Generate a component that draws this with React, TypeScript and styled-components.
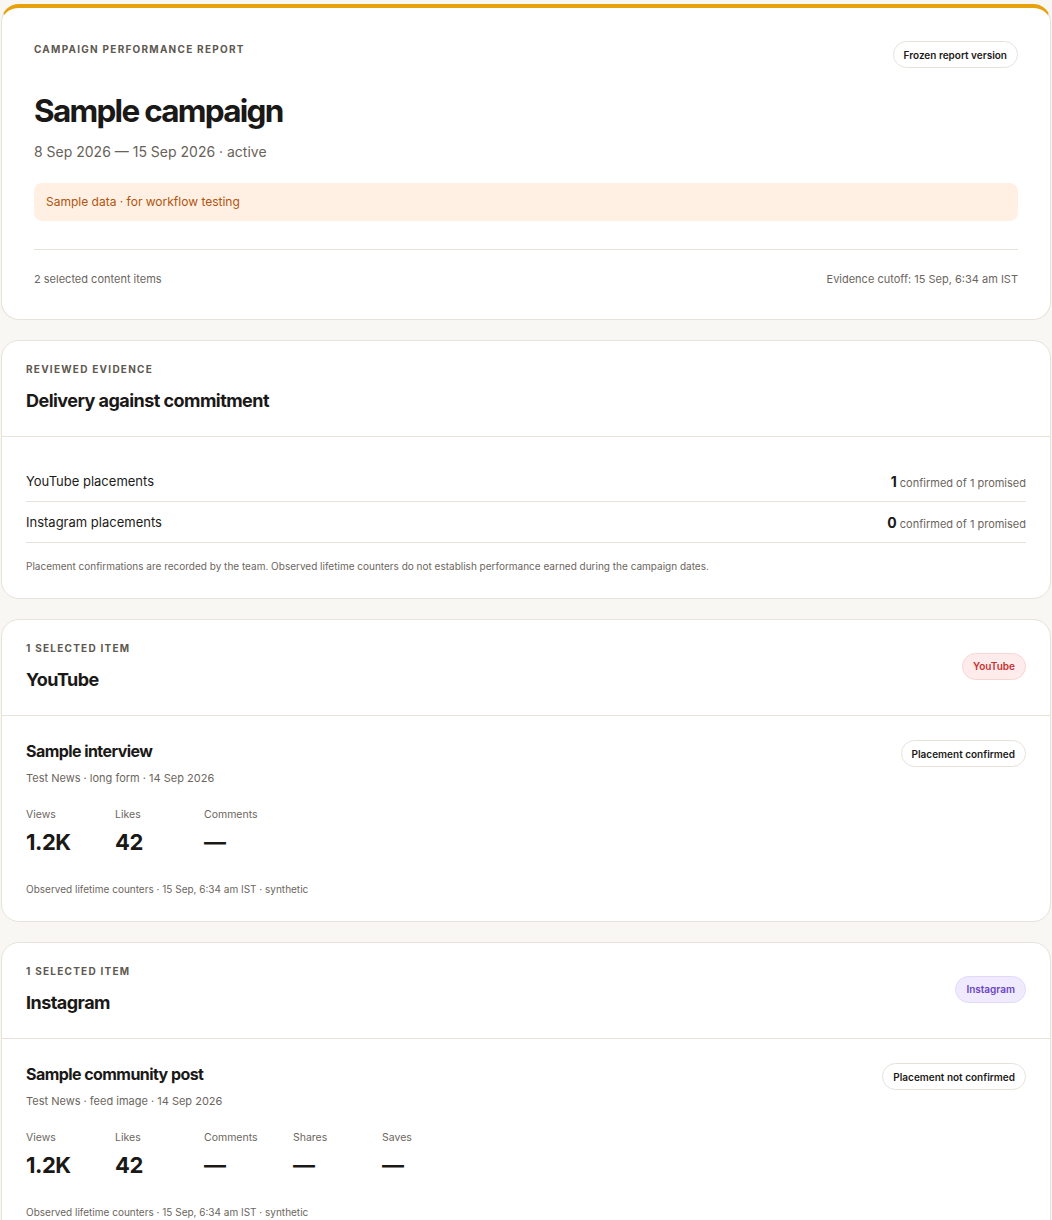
import React from "react";
import styled, { createGlobalStyle } from "styled-components";

const Global = createGlobalStyle`
  html, body { margin: 0; padding: 0; background: #f8f7f3; }
  body { font-family: Inter, "Noto Sans", "Liberation Sans", sans-serif; color: #1c1b19; -webkit-font-smoothing: antialiased; }
  * { box-sizing: border-box; }
`;

const Page = styled.div`
  display: flex;
  flex-direction: column;
  gap: 20px;
  padding: 4px 1px 40px;
`;

const Card = styled.section<{ $accent?: boolean }>`
  background: #ffffff;
  border: 1px solid #e7e3da;
  border-top: ${(p) => (p.$accent ? "4px solid #e7a10d" : "1px solid #e7e3da")};
  border-radius: 18px;
  overflow: hidden;
`;

const HeroBody = styled.div`
  padding: 33px 32px 32px;
`;

const TopRow = styled.div`
  display: flex;
  justify-content: space-between;
  align-items: flex-start;
`;

const Eyebrow = styled.div`
  font-size: 10px;
  line-height: 16px;
  font-weight: 700;
  letter-spacing: 0.125em;
  text-transform: uppercase;
  color: #5d5850;
`;

const Pill = styled.span<{ $tone?: "plain" | "red" | "purple" }>`
  display: inline-flex;
  align-items: center;
  height: 27px;
  padding: 0 10px;
  border-radius: 999px;
  font-size: 10px;
  font-weight: 600;
  white-space: nowrap;
  flex: none;
  background: ${(p) => (p.$tone === "red" ? "#fdeceb" : p.$tone === "purple" ? "#efeafd" : "#ffffff")};
  border: 1px solid ${(p) => (p.$tone === "red" ? "#f5d6d4" : p.$tone === "purple" ? "#e2d9fa" : "#e6e2da")};
  color: ${(p) => (p.$tone === "red" ? "#c8302e" : p.$tone === "purple" ? "#6a46c4" : "#1c1b19")};
`;

const HeroTitle = styled.h1`
  margin: 25px 0 0;
  font-size: 31.5px;
  line-height: 36px;
  font-weight: 700;
  letter-spacing: -0.055em;
  color: #1a1917;
`;

const DateLine = styled.div`
  margin-top: 13px;
  font-size: 14px;
  line-height: 20px;
  color: #67625a;
`;

const Notice = styled.div`
  margin-top: 21px;
  padding: 10px 12px;
  background: #fff0e3;
  border-radius: 8px;
  font-size: 12px;
  line-height: 18px;
  color: #b1540e;
`;

const HeroFooter = styled.div`
  margin-top: 28px;
  padding-top: 21px;
  border-top: 1px solid #e7e3da;
  display: flex;
  justify-content: space-between;
  font-size: 11px;
  line-height: 16px;
  color: #6b665e;
`;

const Header = styled.div`
  display: flex;
  justify-content: space-between;
  align-items: center;
  padding: 20px 24px 23px;
  border-bottom: 1px solid #e7e3da;
`;

const SectionTitle = styled.h2`
  margin: 12px 0 0;
  font-size: 18px;
  line-height: 24px;
  font-weight: 700;
  letter-spacing: -0.03em;
  color: #1a1917;
`;

const Body = styled.div`
  padding: 24px 24px 25px;
`;

const EvidenceRow = styled.div`
  display: flex;
  justify-content: space-between;
  align-items: center;
  height: 41px;
  border-bottom: 1px solid #e7e3da;
  font-size: 13px;
  color: #1c1b19;
`;

const Count = styled.span`
  display: inline-flex;
  align-items: baseline;
  gap: 3px;
  font-size: 11px;
  color: #6b665e;
  b {
    font-size: 14px;
    font-weight: 700;
    color: #1a1917;
  }
`;

const Fine = styled.p<{ $gap?: number }>`
  margin: ${(p) => p.$gap ?? 18}px 0 0;
  font-size: 10px;
  line-height: 14px;
  color: #6b665e;
`;

const ItemHead = styled.div`
  display: flex;
  justify-content: space-between;
  align-items: flex-start;
`;

const ItemTitle = styled.h3`
  margin: 0;
  font-size: 16px;
  line-height: 22px;
  font-weight: 700;
  letter-spacing: -0.035em;
  color: #1a1917;
`;

const Meta = styled.div`
  margin-top: 8px;
  font-size: 11px;
  line-height: 16px;
  color: #6b665e;
`;

const Metrics = styled.div`
  display: flex;
  gap: 16px;
  margin-top: 21px;
`;

const Metric = styled.div`
  width: 73px;
  display: flex;
  flex-direction: column;
  gap: 6px;
`;

const MetricLabel = styled.span`
  font-size: 10.5px;
  line-height: 15px;
  color: #6b665e;
`;

const MetricValue = styled.span`
  font-size: 22px;
  line-height: 28px;
  font-weight: 700;
  letter-spacing: -0.02em;
  color: #1a1917;
`;

type Platform = {
  name: string;
  tone: "red" | "purple";
  item: string;
  meta: string;
  status: string;
  metrics: [string, string][];
};

const platforms: Platform[] = [
  {
    name: "YouTube",
    tone: "red",
    item: "Sample interview",
    meta: "Test News · long form · 14 Sep 2026",
    status: "Placement confirmed",
    metrics: [
      ["Views", "1.2K"],
      ["Likes", "42"],
      ["Comments", "—"],
    ],
  },
  {
    name: "Instagram",
    tone: "purple",
    item: "Sample community post",
    meta: "Test News · feed image · 14 Sep 2026",
    status: "Placement not confirmed",
    metrics: [
      ["Views", "1.2K"],
      ["Likes", "42"],
      ["Comments", "—"],
      ["Shares", "—"],
      ["Saves", "—"],
    ],
  },
];

export default function App() {
  return (
    <>
      <Global />
      <Page>
        <Card $accent>
          <HeroBody>
            <TopRow>
              <Eyebrow>Campaign performance report</Eyebrow>
              <Pill>Frozen report version</Pill>
            </TopRow>
            <HeroTitle>Sample campaign</HeroTitle>
            <DateLine>8 Sep 2026 — 15 Sep 2026 · active</DateLine>
            <Notice>Sample data · for workflow testing</Notice>
            <HeroFooter>
              <span>2 selected content items</span>
              <span>Evidence cutoff: 15 Sep, 6:34 am IST</span>
            </HeroFooter>
          </HeroBody>
        </Card>

        <Card>
          <Header>
            <div>
              <Eyebrow>Reviewed evidence</Eyebrow>
              <SectionTitle>Delivery against commitment</SectionTitle>
            </div>
          </Header>
          <Body>
            <EvidenceRow>
              <span>YouTube placements</span>
              <Count>
                <b>1</b> confirmed of 1 promised
              </Count>
            </EvidenceRow>
            <EvidenceRow>
              <span>Instagram placements</span>
              <Count>
                <b>0</b> confirmed of 1 promised
              </Count>
            </EvidenceRow>
            <Fine $gap={16}>
              Placement confirmations are recorded by the team. Observed lifetime counters do not establish
              performance earned during the campaign dates.
            </Fine>
          </Body>
        </Card>

        {platforms.map((p) => (
          <Card key={p.name}>
            <Header>
              <div>
                <Eyebrow>1 selected item</Eyebrow>
                <SectionTitle>{p.name}</SectionTitle>
              </div>
              <Pill $tone={p.tone}>{p.name}</Pill>
            </Header>
            <Body>
              <ItemHead>
                <div>
                  <ItemTitle>{p.item}</ItemTitle>
                  <Meta>{p.meta}</Meta>
                </div>
                <Pill>{p.status}</Pill>
              </ItemHead>
              <Metrics>
                {p.metrics.map(([label, value]) => (
                  <Metric key={label}>
                    <MetricLabel>{label}</MetricLabel>
                    <MetricValue>{value}</MetricValue>
                  </Metric>
                ))}
              </Metrics>
              <Fine $gap={26}>Observed lifetime counters · 15 Sep, 6:34 am IST · synthetic</Fine>
            </Body>
          </Card>
        ))}
      </Page>
    </>
  );
}
